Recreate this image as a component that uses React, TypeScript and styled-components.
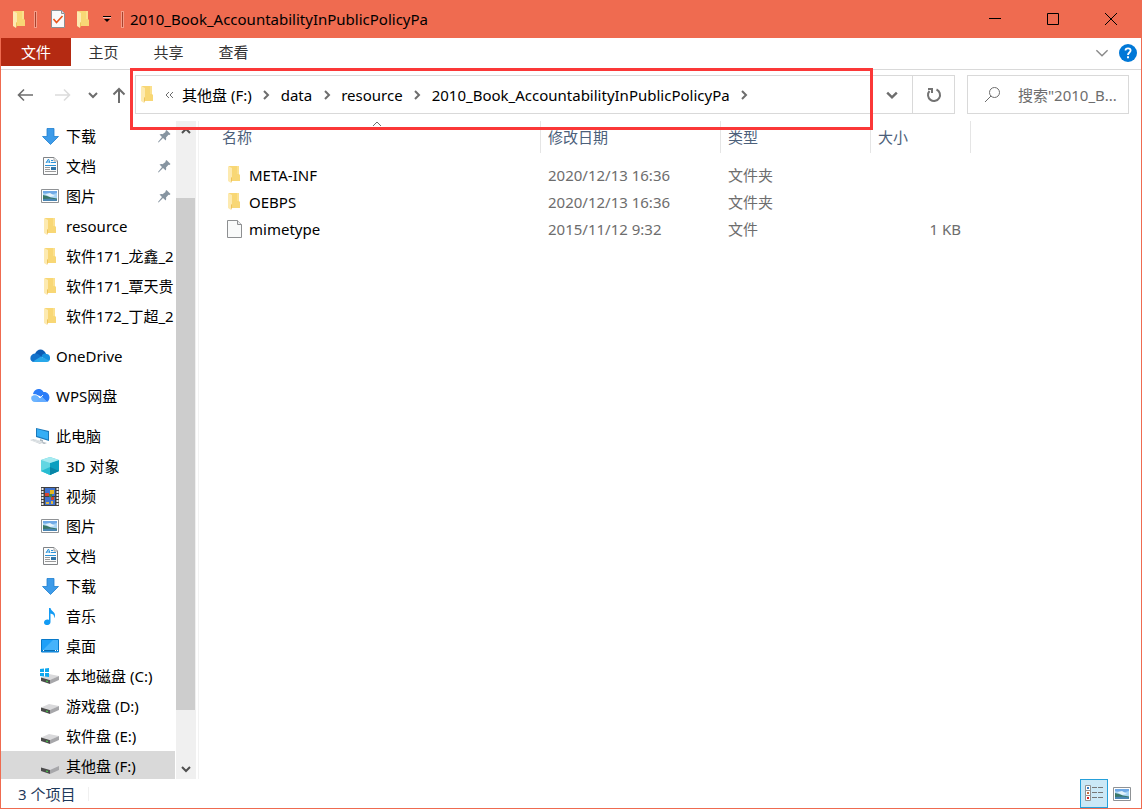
import React from "react";
import styled, { createGlobalStyle } from "styled-components";

const accent = "#ef6b50";
const line = "#d9d9d9";

const GlobalStyle = createGlobalStyle`
  * { box-sizing: border-box; }
  body {
    margin: 0;
    background: #fff;
    color: #000;
    font: 15px/20px "Noto Sans", "Noto Sans CJK SC", sans-serif;
  }
  button, input { font: inherit; color: inherit; }
  button { padding: 0; border: 0; background: none; }
  a { color: inherit; text-decoration: none; }
  ul, ol { list-style: none; margin: 0; padding: 0; }
  svg { display: block; flex: none; }
`;

const Window = styled.div`
  display: flex;
  flex-direction: column;
  height: 100vh;
  border: 1px solid ${accent};
  border-top: 0;
  overflow: hidden;
`;

const TitleBar = styled.header`
  display: flex;
  align-items: center;
  flex: none;
  height: 38px;
  padding: 0 1px 0 8px;
  background: ${accent};
`;

const QuickAccess = styled.div`
  display: flex;
  align-items: center;
  gap: 5px;
  margin-right: 6px;
`;

const QuickButton = styled.button<{ $narrow?: boolean }>`
  display: flex;
  justify-content: center;
  width: ${(p) => (p.$narrow ? 18 : 20)}px;
`;

const TitleDivider = styled.span<{ $gap?: number }>`
  width: 3px;
  height: 17px;
  margin-right: ${(p) => p.$gap ?? 0}px;
  border: 1px solid #f59c88;
  background: #a8432f;
`;

const WindowTitle = styled.h1`
  flex: 1;
  margin: 0;
  font-size: 15px;
  font-weight: 400;
  line-height: 20px;
`;

const CaptionButton = styled.button`
  display: flex;
  align-items: center;
  justify-content: center;
  width: 58px;
  height: 38px;
`;

const Ribbon = styled.nav`
  display: flex;
  flex: none;
  height: 32px;
  border-bottom: 1px solid ${line};
`;

const RibbonTab = styled.button<{ $file?: boolean }>`
  width: ${(p) => (p.$file ? 70 : 65)}px;
  height: 28px;
  background: ${(p) => (p.$file ? "#b42a12" : "transparent")};
  color: ${(p) => (p.$file ? "#fff" : "#333")};
`;

const RibbonTools = styled.div`
  display: flex;
  align-items: center;
  gap: 10px;
  height: 30px;
  margin-left: auto;
  padding-right: 4px;
`;

const AddressRow = styled.div`
  display: flex;
  align-items: center;
  flex: none;
  height: 51px;
  padding: 0 12px 2px 14px;
`;

const History = styled.div`
  display: flex;
  align-items: center;
  width: 120px;
`;

const HistoryButton = styled.button<{ $gap: number }>`
  margin-left: ${(p) => p.$gap}px;
`;

const AddressBox = styled.div`
  display: flex;
  flex: 1;
  height: 39px;
  border: 1px solid ${line};
`;

const Crumbs = styled.ol`
  position: relative;
  display: flex;
  align-items: center;
  flex: 1;
  padding-left: 1px;
`;

const Crumb = styled.li`
  display: flex;
  align-items: center;
`;

const CrumbChevron = styled.span`
  display: flex;
  justify-content: center;
  width: 29px;
`;

const CrumbOverflow = styled.button`
  display: flex;
  justify-content: center;
  width: 25px;
`;

const Highlight = styled.li`
  position: absolute;
  z-index: 1;
  inset: -8px -1px -17px -6px;
  border: 3px solid #fb3838;
  pointer-events: none;
`;

const AddressButton = styled.button<{ $divided?: boolean }>`
  display: flex;
  align-items: center;
  justify-content: center;
  width: ${(p) => (p.$divided ? 42 : 40)}px;
  border-left: ${(p) => (p.$divided ? `1px solid ${line}` : "0")};
`;

const SearchBox = styled.label`
  display: flex;
  align-items: center;
  gap: 17px;
  width: 162px;
  height: 39px;
  margin-left: 12px;
  padding-left: 16px;
  border: 1px solid ${line};
`;

const SearchInput = styled.input`
  flex: 1;
  min-width: 0;
  padding: 0;
  border: 0;
  outline: 0;
  background: none;
  &::placeholder { color: #6d6d6d; opacity: 1; }
`;

const Body = styled.div`
  display: flex;
  flex: 1;
  min-height: 0;
`;

const NavPane = styled.nav`
  display: flex;
  flex: none;
  width: 198px;
  border-right: 1px solid #f2f2f2;
`;

const NavGroups = styled.div`
  display: flex;
  flex-direction: column;
  gap: 10px;
  width: 174px;
  margin-right: 1px;
  overflow: hidden;
`;

const NavItem = styled.a<{ $level: number; $selected?: boolean }>`
  display: flex;
  align-items: center;
  gap: 6px;
  height: 30px;
  padding-left: ${(p) => 19 + p.$level * 10}px;
  background: ${(p) => (p.$selected ? "#d9d9d9" : "transparent")};
  white-space: nowrap;
`;

const IconSlot = styled.span`
  display: flex;
  justify-content: center;
  flex: none;
  width: 20px;
`;

const PinSlot = styled.span`
  margin-left: auto;
  padding-right: 4px;
`;

const ScrollBar = styled.div`
  display: flex;
  flex-direction: column;
  width: 20px;
  background: #f0f0f0;
`;

const ScrollButton = styled.button`
  display: flex;
  align-items: center;
  justify-content: center;
  height: 20px;
  padding-right: 1px;
`;

const ScrollSpace = styled.div<{ $share: number }>`
  flex: ${(p) => p.$share};
`;

const ScrollThumb = styled(ScrollSpace)`
  margin-right: 1px;
  background: #cdcdcd;
`;

const Files = styled.main`
  flex: 1;
  min-width: 0;
`;

const FileTable = styled.table`
  table-layout: fixed;
  width: 772px;
  border-collapse: separate;
  border-spacing: 0;
`;

const HeadCell = styled.th<{ $width: number; $indent: number }>`
  position: relative;
  width: ${(p) => p.$width}px;
  height: 32px;
  padding: 0 0 0 ${(p) => p.$indent}px;
  border-right: 1px solid #e5e5e5;
  color: #4c607a;
  font-weight: 400;
  text-align: left;
`;

const SortMark = styled.span`
  position: absolute;
  top: -2px;
  left: 173px;
`;

const FileBody = styled.tbody`
  &::before {
    content: "";
    display: block;
    height: 8px;
  }
`;

const Cell = styled.td<{ $right?: boolean }>`
  height: 27px;
  padding: 0 ${(p) => (p.$right ? 10 : 0)}px 0 7px;
  color: #6d6d6d;
  text-align: ${(p) => (p.$right ? "right" : "left")};
`;

const NameCell = styled(Cell)`
  padding-left: 25px;
  color: #000;
`;

const FileLink = styled.a`
  display: flex;
  align-items: center;
  gap: 5px;
`;

const StatusBar = styled.footer`
  display: flex;
  align-items: center;
  flex: none;
  height: 29px;
  padding: 0 5px 0 17px;
  color: #1e395b;
`;

const ItemCount = styled.span`
  width: 71px;
  border-right: 1px solid #f0f0f0;
  line-height: 14px;
`;

const ViewButton = styled.button<{ $active?: boolean }>`
  display: flex;
  align-items: center;
  justify-content: center;
  width: 28px;
  height: 29px;
  border: 1px solid ${(p) => (p.$active ? "#26a0da" : "transparent")};
  background: ${(p) => (p.$active ? "#cbe8f6" : "transparent")};
`;

const ViewButtons = styled.div`
  display: flex;
  margin-left: auto;
`;

const FolderIcon = () => (
  <svg width="12" height="17" viewBox="0 0 12 17">
    <path d="M1 0h10v8l1 1v6H3z" fill="#f8d775" />
    <path d="M9 0h2v8H9z" fill="#fbe08d" />
    <path d="M0 0l4 2v9l-1 1v5L0 15z" fill="#fdeab0" />
    <path d="M4 2v9l-1 1v5l1-2V2z" fill="#eec35d" />
  </svg>
);

const CheckPageIcon = () => (
  <svg width="14" height="18" viewBox="0 0 14 18">
    <path d="M.5.5h10l3 3v14H.5z" fill="#fafafa" stroke="#8d8f92" />
    <path d="M10.500 .5v3h3" fill="#dde" stroke="#8d8f92" />
    <path d="M2.500 9l3 3.500 6-6.500" fill="none" stroke="#e8551c" strokeWidth="1.600" />
  </svg>
);

const CustomizeIcon = () => (
  <svg width="8" height="8" viewBox="0 0 8 8">
    <path d="M0 1h8v1H0z" />
    <path d="M0 2h8v1H0z" fill="#f9c2b6" />
    <path d="M1 4h6L4 7z" />
  </svg>
);

const Chevron = ({ size = 10, color = "#6d6d6d", width = 2, turn = "down" }: {
  size?: number; color?: string; width?: number; turn?: "down" | "up" | "right";
}) => {
  const path = { down: "M1 3l4 4 4-4", up: "M1 7l4-4 4 4", right: "M3 1l4 4-4 4" }[turn];
  return (
    <svg width={size} height={size} viewBox="0 0 10 10">
      <path d={path} fill="none" stroke={color} strokeWidth={width} />
    </svg>
  );
};

const Arrow = ({ color, up }: { color: string; up?: boolean }) => (
  <svg width="16" height="16" viewBox="0 0 16 16" fill="none" stroke={color} strokeWidth={up ? 2 : 1.600}>
    <path d={up ? "M8 16V2M2.500 7.500L8 2l5.500 5.500" : "M16 8H1.500M7 2.500L1.500 8 7 13.500"} />
  </svg>
);

const ForwardArrow = () => (
  <svg width="16" height="16" viewBox="0 0 16 16" fill="none" stroke="#dcdcdc" strokeWidth="1.600">
    <path d="M0 8h14.500M9 2.500L14.500 8 9 13.500" />
  </svg>
);

const OverflowIcon = () => (
  <svg width="9" height="8" viewBox="0 0 9 8" fill="none" stroke="#6d6d6d">
    <path d="M4 1L1 4l3 3M8 1L5 4l3 3" />
  </svg>
);

const RefreshIcon = () => (
  <svg width="16" height="16" viewBox="0 0 16 16" fill="none" stroke="#737373" strokeWidth="2">
    <path d="M10.500 2.500A6 6 0 1 1 3.500 4" />
    <path d="M2 2h4v4" />
  </svg>
);

const SearchIcon = () => (
  <svg width="17" height="17" viewBox="0 0 17 17" fill="none" stroke="#6d6d6d">
    <circle cx="10.500" cy="6.500" r="5" />
    <path d="M7 10L1 16" />
  </svg>
);

const HelpIcon = () => (
  <svg width="18" height="18" viewBox="0 0 18 18">
    <circle cx="9" cy="9" r="9" fill="#0078d7" />
    <path d="M6.500 6.500C6.500 3.500 11.600 3.600 11.600 6.600 11.600 8.500 9 8.500 9 11" fill="none" stroke="#fff" strokeWidth="1.800" />
    <path d="M8 12.300h2v2H8z" fill="#fff" />
  </svg>
);

const DownloadIcon = () => (
  <svg width="17" height="17" viewBox="0 0 17 17">
    <path d="M5 .5h7v8h4.500l-8 8-8-8H5z" fill="#3d9be9" stroke="#1e7fcf" strokeWidth=".8" />
  </svg>
);

const DocumentIcon = () => (
  <svg width="15" height="18" viewBox="0 0 15 18">
    <path d="M.5.5h10.500l3.500 3.500v13.500H.5z" fill="#fcfcfc" stroke="#808386" />
    <path d="M11 .5V4h3.500" fill="#e8e8e8" stroke="#a5a7a9" />
    <path d="M3 6l2.500-4L7 6M3.500 5H7M8 3.500h2M8 5.500h5M2 8.500h11" fill="none" stroke="#2b93d9" />
    <path d="M2 10.500h5M2 12.500h5M2 14.500h11" stroke="#9a9a9a" />
    <path d="M8 10h5v3H8z" fill="#3175a8" />
  </svg>
);

const PictureIcon = () => (
  <svg width="18" height="14" viewBox="0 0 18 14">
    <path d="M.5.5h17v13H.5z" fill="#fff" stroke="#8f9295" />
    <path d="M2 2h14v10H2z" fill="#a7d3f4" />
    <path d="M2 2h14v2L9 6 2 4z" fill="#6fa9e6" />
    <path d="M4 5l5-1 5 3-5 1z" fill="#e3f2fb" />
    <path d="M2 6l4 1 4 1.500 6 1V12H2z" fill="#3a7867" />
    <path d="M2 10l8-.5 6 1V12H2z" fill="#4a86b4" />
  </svg>
);

const OneDriveIcon = () => (
  <svg width="20" height="14" viewBox="0 0 20 14">
    <path d="M5 5C7-1 14-1 16 5l-6 4z" fill="#0a5cb5" />
    <path d="M4 13C-1 13-1 5 5 4.500c3-.3 5 2 7 3.500l-6 5z" fill="#1272cb" />
    <path d="M12 6c2-2 4-1.500 4.500-1 4 0 5 6 1.500 7.500L12 8z" fill="#1490df" />
    <path d="M3 12.500L11 7.500l8 4c-.5 1-1.500 1.500-3 1.500H5z" fill="#28a8ea" />
  </svg>
);

const WpsCloudIcon = () => (
  <svg width="19" height="14" viewBox="0 0 19 14">
    <path d="M2 5C3-.5 10-2 12.500 3c6-.5 8 7 3.500 10l-7-6z" fill="#2b7df8" />
    <path d="M4 13C-1 13-1 6 3.500 5.500 7 5 8 9 12 13z" fill="#6cb4ff" />
    <path d="M5 13l5.500-6 5.500 6z" fill="#66adff" />
    <path d="M1 6.500c4-2 6 0 8 2.500l3-3" fill="none" stroke="#fff" strokeWidth=".9" />
  </svg>
);

const ComputerIcon = () => (
  <svg width="20" height="18" viewBox="0 0 20 18">
    <path d="M6 1l13 3v10L6 10z" fill="#1b79bb" />
    <path d="M7 2l11 3v7.500L7 9z" fill="#35aef5" />
    <path d="M10 12l3 1v2l4 1-3 1-4-2z" fill="#a8b4bd" />
    <path d="M0 13l4-1 10 3-4 2z" fill="#c9cfd4" />
    <path d="M2 13.500l9 2.500M4 12.500l8 2.500" stroke="#edf0f2" strokeWidth=".7" />
  </svg>
);

const CubeIcon = () => (
  <svg width="18" height="18" viewBox="0 0 18 18">
    <path d="M0 3l9-3 9 3v11l-9 4-9-4z" fill="#54cfdf" />
    <path d="M0 3l9 3v12l-9-4z" fill="#62d6e2" />
    <path d="M9 6l9-3v11l-9 4z" fill="#0a9fc0" />
    <path d="M0 3l9-3 9 3-9 3z" fill="#a6eaf0" />
    <path d="M0 14l9-4v8z" fill="#27bcd1" />
    <path d="M18 14l-9-4v8z" fill="#0885a6" />
  </svg>
);

const VideoIcon = () => (
  <svg width="18" height="19" viewBox="0 0 18 19">
    <path d="M0 0h18v19H0z" fill="#404040" />
    <path d="M1.500 1v18M16.500 1v18" stroke="#eee" strokeWidth="2" strokeDasharray="2 1" />
    <path d="M4 1h10v8H4zM4 10h10v8H4z" fill="#3f72cf" />
    <path d="M4 6h4v3H4z" fill="#d8432e" />
    <path d="M9 3h4v4H9z" fill="#e4b623" />
    <path d="M8 7h3v3H8z" fill="#46883a" />
    <path d="M10 10h3v3h-3z" fill="#ca4227" />
    <path d="M5 15h3v2H5zM10 14h2v3h-2z" fill="#dfb541" />
  </svg>
);

const MusicIcon = () => (
  <svg width="12" height="17" viewBox="0 0 12 17">
    <path d="M5 0h1.500c.5 3 4.500 4 4.500 7 0 1-.5 3-1 3 .5-3-1-4-3.500-4.500V14c0 4-6.500 4-6.500.5C0 12 3 11 5 12z" fill="#129bf4" />
  </svg>
);

const DesktopIcon = () => (
  <svg width="18" height="14" viewBox="0 0 18 14">
    <path d="M.5.5h17v12.500H.5z" fill="#1ea0f8" stroke="#0879c9" />
    <path d="M12 1h5v10H2z" fill="#45b3fb" />
    <path d="M1 11.500h16" stroke="#086cb0" />
    <path d="M2 11.500h1M14 11.500h1M16 11.500h1" stroke="#fff" />
  </svg>
);

const DriveIcon = ({ system }: { system?: boolean }) => (
  <svg width="20" height="16" viewBox="0 0 20 16">
    <path d="M1 9.500L9 6l10 2-8 4z" fill="#d9d9db" />
    <path d="M1 9.500l9 2.500v4l-9-3z" fill="#4c4c4c" />
    <path d="M10 12l9-4v4l-9 4z" fill="#a7a7aa" />
    <path d="M6 12.500l2 .5v1l-2-.5z" fill="#4cdc49" />
    {system && <path d="M0 1l4-.5V4H0zM5 .4L9 0v4H5zM0 5h4v3.500L0 8zM5 5h4v4l-4-.5z" fill="#10a8ef" />}
  </svg>
);

const PinIcon = () => (
  <svg width="13" height="13" viewBox="0 0 13 13">
    <path d="M8.500 0l4 4-1 1-1-.3L8 7.500c.4 1 .3 2-.3 3L5 8 .5 12.500 0 12l4-5-2.500-2.500c1-.6 2-.7 3-.3L7.500 2V1z" fill="#8795a1" />
  </svg>
);

const BlankFileIcon = () => (
  <svg width="15" height="18" viewBox="0 0 15 18">
    <path d="M.5.5h10l4 4v13H.5z" fill="#f9fafa" stroke="#8d8f91" />
    <path d="M10.500.5v4h4" fill="#e9eaeb" stroke="#8d8f91" />
  </svg>
);

const DetailsIcon = () => (
  <svg width="18" height="17" viewBox="0 0 18 17">
    <path d="M.5.5h5v5h-5zM.5 5.500h5v5h-5zM.5 10.500h5v5h-5z" fill="#fff" stroke="#919191" />
    <path d="M2 2h2v2H2z" fill="#3b7cc0" />
    <path d="M2 7h2v2H2z" fill="#c46b3c" />
    <path d="M2 12h2v2H2z" fill="#d82222" />
    <path d="M7 2.500h5M13 2.500h5M7 7.500h5M13 7.500h5M7 12.500h5M13 12.500h5" stroke="#777" />
  </svg>
);

type Entry = { label: string; icon: React.ReactNode; level: number; pinned?: boolean; selected?: boolean };

const navGroups: Entry[][] = [
  [
    { label: "下载", icon: <DownloadIcon />, level: 2, pinned: true },
    { label: "文档", icon: <DocumentIcon />, level: 2, pinned: true },
    { label: "图片", icon: <PictureIcon />, level: 2, pinned: true },
    { label: "resource", icon: <FolderIcon />, level: 2 },
    { label: "软件171_龙鑫_2", icon: <FolderIcon />, level: 2 },
    { label: "软件171_覃天贵", icon: <FolderIcon />, level: 2 },
    { label: "软件172_丁超_2", icon: <FolderIcon />, level: 2 },
  ],
  [{ label: "OneDrive", icon: <OneDriveIcon />, level: 1 }],
  [{ label: "WPS网盘", icon: <WpsCloudIcon />, level: 1 }],
  [
    { label: "此电脑", icon: <ComputerIcon />, level: 1 },
    { label: "3D 对象", icon: <CubeIcon />, level: 2 },
    { label: "视频", icon: <VideoIcon />, level: 2 },
    { label: "图片", icon: <PictureIcon />, level: 2 },
    { label: "文档", icon: <DocumentIcon />, level: 2 },
    { label: "下载", icon: <DownloadIcon />, level: 2 },
    { label: "音乐", icon: <MusicIcon />, level: 2 },
    { label: "桌面", icon: <DesktopIcon />, level: 2 },
    { label: "本地磁盘 (C:)", icon: <DriveIcon system />, level: 2 },
    { label: "游戏盘 (D:)", icon: <DriveIcon />, level: 2 },
    { label: "软件盘 (E:)", icon: <DriveIcon />, level: 2 },
    { label: "其他盘 (F:)", icon: <DriveIcon />, level: 2, selected: true },
  ],
];

const columns = [
  { label: "名称", width: 342, indent: 23 },
  { label: "修改日期", width: 180, indent: 7 },
  { label: "类型", width: 150, indent: 7 },
  { label: "大小", width: 100, indent: 7 },
];

const files = [
  { name: "META-INF", date: "2020/12/13 16:36", type: "文件夹", size: "", icon: <FolderIcon /> },
  { name: "OEBPS", date: "2020/12/13 16:36", type: "文件夹", size: "", icon: <FolderIcon /> },
  { name: "mimetype", date: "2015/11/12 9:32", type: "文件", size: "1 KB", icon: <BlankFileIcon /> },
];

const crumbs = ["其他盘 (F:)", "data", "resource", "2010_Book_AccountabilityInPublicPolicyPa"];

export default function App() {
  return (
    <Window>
      <GlobalStyle />
      <TitleBar>
        <QuickAccess>
          <IconSlot><FolderIcon /></IconSlot>
          <TitleDivider $gap={6} />
          <QuickButton aria-label="属性"><CheckPageIcon /></QuickButton>
          <QuickButton aria-label="新建文件夹"><FolderIcon /></QuickButton>
          <QuickButton $narrow aria-label="自定义快速访问工具栏"><CustomizeIcon /></QuickButton>
          <TitleDivider />
        </QuickAccess>
        <WindowTitle>2010_Book_AccountabilityInPublicPolicyPa</WindowTitle>
        <CaptionButton aria-label="最小化">
          <svg width="12" height="12" viewBox="0 0 12 12"><path d="M0 5h12v1H0z" /></svg>
        </CaptionButton>
        <CaptionButton aria-label="最大化">
          <svg width="12" height="12" viewBox="0 0 12 12"><path d="M.5.5h11v11H.5z" fill="none" stroke="#000" /></svg>
        </CaptionButton>
        <CaptionButton aria-label="关闭">
          <svg width="12" height="12" viewBox="0 0 12 12"><path d="M0 0l12 12M12 0L0 12" stroke="#000" /></svg>
        </CaptionButton>
      </TitleBar>

      <Ribbon>
        <RibbonTab $file>文件</RibbonTab>
        <RibbonTab>主页</RibbonTab>
        <RibbonTab>共享</RibbonTab>
        <RibbonTab>查看</RibbonTab>
        <RibbonTools>
          <button aria-label="展开功能区"><Chevron size={14} color="#8a8a8a" width={1} /></button>
          <button aria-label="帮助"><HelpIcon /></button>
        </RibbonTools>
      </Ribbon>

      <AddressRow>
        <History>
          <HistoryButton $gap={2} aria-label="后退"><Arrow color="#6d6d6d" /></HistoryButton>
          <HistoryButton $gap={22} aria-label="前进"><ForwardArrow /></HistoryButton>
          <HistoryButton $gap={17} aria-label="最近浏览的位置"><Chevron /></HistoryButton>
          <HistoryButton $gap={13} aria-label="上移"><Arrow color="#6d6d6d" up /></HistoryButton>
        </History>
        <AddressBox>
          <Crumbs>
            <IconSlot as="li"><FolderIcon /></IconSlot>
            <Crumb><CrumbOverflow aria-label="更多"><OverflowIcon /></CrumbOverflow></Crumb>
            {crumbs.map((label) => (
              <Crumb key={label}>
                <a href="#path">{label}</a>
                <CrumbChevron><Chevron turn="right" /></CrumbChevron>
              </Crumb>
            ))}
            <Highlight aria-hidden="true" />
          </Crumbs>
          <AddressButton aria-label="以前的位置"><Chevron size={12} /></AddressButton>
          <AddressButton $divided aria-label="刷新"><RefreshIcon /></AddressButton>
        </AddressBox>
        <SearchBox>
          <SearchIcon />
          <SearchInput type="text" aria-label="搜索" placeholder={'搜索"2010_B...'} />
        </SearchBox>
      </AddressRow>

      <Body>
        <NavPane>
          <NavGroups>
            {navGroups.map((group, index) => (
              <ul key={index}>
                {group.map((item) => (
                  <li key={item.label}>
                    <NavItem href="#folder" $level={item.level} $selected={item.selected}>
                      <IconSlot>{item.icon}</IconSlot>
                      {item.label}
                      {item.pinned && <PinSlot><PinIcon /></PinSlot>}
                    </NavItem>
                  </li>
                ))}
              </ul>
            ))}
          </NavGroups>
          <ScrollBar>
            <ScrollButton aria-label="向上滚动"><Chevron turn="up" color="#505050" /></ScrollButton>
            <ScrollSpace $share={57} />
            <ScrollThumb $share={512} />
            <ScrollSpace $share={49} />
            <ScrollButton aria-label="向下滚动"><Chevron color="#505050" /></ScrollButton>
          </ScrollBar>
        </NavPane>

        <Files>
          <FileTable>
            <thead>
              <tr>
                {columns.map((column, index) => (
                  <HeadCell key={column.label} $width={column.width} $indent={column.indent}>
                    {column.label}
                    {index === 0 && <SortMark><Chevron turn="up" width={1} /></SortMark>}
                  </HeadCell>
                ))}
              </tr>
            </thead>
            <FileBody>
              {files.map((file) => (
                <tr key={file.name}>
                  <NameCell>
                    <FileLink href="#file"><IconSlot>{file.icon}</IconSlot>{file.name}</FileLink>
                  </NameCell>
                  <Cell>{file.date}</Cell>
                  <Cell>{file.type}</Cell>
                  <Cell $right>{file.size}</Cell>
                </tr>
              ))}
            </FileBody>
          </FileTable>
        </Files>
      </Body>

      <StatusBar>
        <ItemCount>3 个项目</ItemCount>
        <ViewButtons>
          <ViewButton $active aria-label="详细信息"><DetailsIcon /></ViewButton>
          <ViewButton aria-label="大图标"><PictureIcon /></ViewButton>
        </ViewButtons>
      </StatusBar>
    </Window>
  );
}
